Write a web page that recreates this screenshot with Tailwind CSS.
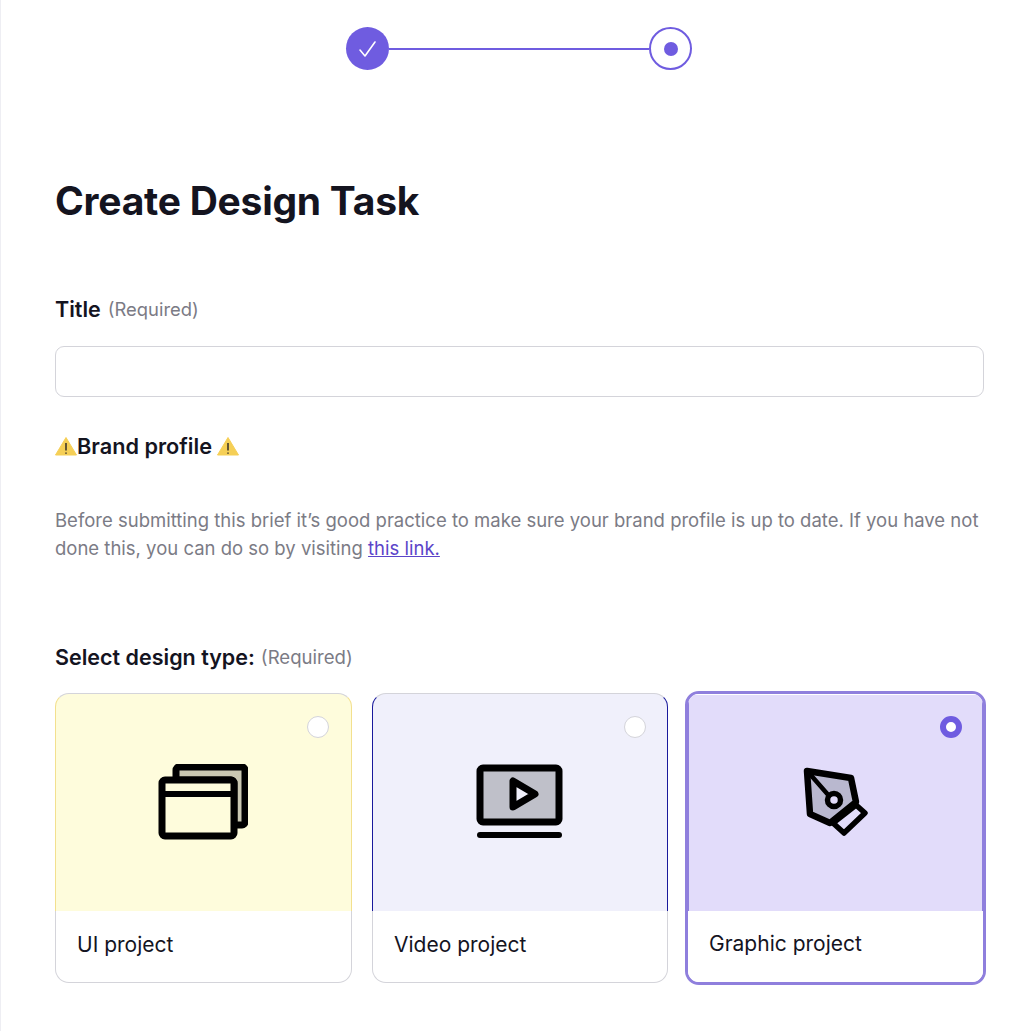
<!doctype html>
<html lang="en">
<head>
<meta charset="utf-8">
<title>Create Design Task</title>
<script src="https://cdn.jsdelivr.net/npm/@tailwindcss/browser@4"></script>
</head>
<body class="bg-white font-['Inter',sans-serif] text-[#14141f]">
<div class="w-[1030px] h-[1031px] overflow-hidden pl-[54px] pr-[46px] pt-[27px] border-l border-[#eeeef3]">
  <!-- stepper -->
  <div class="flex items-center justify-center mr-[1px]">
    <div class="w-[43px] h-[43px] rounded-full bg-[#6f5ce0] flex items-center justify-center">
      <svg width="20" height="18" viewBox="0 0 20 18" fill="none" stroke="white" stroke-width="1.6" stroke-linecap="round" stroke-linejoin="round"><path d="M2 10l5 6L17 2"/></svg>
    </div>
    <div class="w-[260px] h-[2px] bg-[#6f5ce0]"></div>
    <div class="w-[43px] h-[43px] rounded-full border-2 border-[#6f5ce0] flex items-center justify-center">
      <div class="w-[14px] h-[14px] rounded-full bg-[#6f5ce0]"></div>
    </div>
  </div>

  <h1 class="mt-[106px] text-[39px] leading-[50px] font-bold tracking-[-0.25px]">Create Design Task</h1>

  <div class="mt-[69px] flex items-baseline gap-[7px] leading-[28px]">
    <span class="text-[21.5px] font-semibold">Title</span>
    <span class="text-[18.4px] text-[#7b7b85] relative top-[-1px]">(Required)</span>
  </div>
  <div class="mt-[22px] h-[51px] rounded-[9px] border border-[#d4d4da] bg-white"></div>

  <div class="mt-[35px] flex items-center text-[21.7px] leading-[28px] font-semibold">
    <svg width="22" height="20" viewBox="0 0 22 20" class="shrink-0"><path d="M11 1.5L21.5 19H.5z" fill="#f5cf56" stroke="#f5cf56" stroke-linejoin="round"/><path d="M11 7v7.5M11 16.4v1.4" stroke="#14141f" stroke-width="1.3"/></svg>
    <span>Brand profile</span>
    <svg width="22" height="20" viewBox="0 0 22 20" class="shrink-0 ml-[5px]"><path d="M11 1.5L21.5 19H.5z" fill="#f5cf56" stroke="#f5cf56" stroke-linejoin="round"/><path d="M11 7v7.5M11 16.4v1.4" stroke="#14141f" stroke-width="1.3"/></svg>
  </div>

  <p class="mt-[46px] text-[18.5px] leading-[28px] text-[#7b7b85]">Before submitting this brief it’s good practice to make sure your brand profile is up to date. If you have not done this, you can do so by visiting <a class="text-[#5b45c9] underline" href="#">this link.</a></p>

  <div class="mt-[81px] flex items-baseline gap-[6px] leading-[28px]">
    <span class="text-[21.5px] font-semibold">Select design type:</span>
    <span class="text-[18.6px] text-[#7b7b85] relative top-[-1px]">(Required)</span>
  </div>

  <!-- design type cards -->
  <div class="mt-[21px] flex">
    <div class="shrink-0 w-[297px] h-[290px] flex flex-col">
      <div class="relative h-[218px] rounded-t-[14px] bg-[#fefcdc] flex items-center justify-center border-x border-x-[#f3e08e] border-t border-t-[#d4d4da]">
        <div class="absolute top-[22px] right-[22px] w-[22px] h-[22px] rounded-full bg-white border border-[#d4d4da]"></div>
        <svg width="90" height="76" viewBox="0 0 90 76" fill="none" stroke="black" stroke-width="7" stroke-linejoin="round" stroke-linecap="round" class="mt-[-2px] ml-[-1px]">
          <path d="M18 6a3 3 0 0 1 3-3h63a3 3 0 0 1 3 3v52a3 3 0 0 1-3 3h-8V19a3 3 0 0 0-3-3H18z" fill="#cac8b2"/>
          <rect x="4" y="16" width="72" height="56" rx="3" fill="#fefcdc"/>
          <path d="M4 30h72" stroke-width="6"/>
        </svg>
      </div>
      <div class="flex-1 bg-white pl-[21px] pt-[19px] text-[21px] leading-[30px] border-x border-b border-[#d4d4da] rounded-b-[14px]">UI project</div>
    </div>

    <div class="shrink-0 ml-[20px] w-[296px] h-[290px] flex flex-col">
      <div class="relative h-[218px] rounded-t-[14px] bg-[#f0f0fb] flex items-center justify-center border-x border-x-[#1a1a9c] border-t border-t-[#d4d4da]">
        <div class="absolute top-[22px] right-[21px] w-[22px] h-[22px] rounded-full bg-white border border-[#d4d4da]"></div>
        <svg width="88" height="76" viewBox="0 0 88 76" fill="none" stroke="black" stroke-width="7" stroke-linejoin="round" stroke-linecap="round" class="mt-[-1px]">
          <rect x="4" y="4" width="79" height="54" rx="3" fill="#bfc0c9"/>
          <path d="M37 17v26l22-13z" fill="#f0f0fb"/>
          <path d="M4 71h79" stroke-width="6"/>
        </svg>
      </div>
      <div class="flex-1 bg-white pl-[21px] pt-[19px] text-[21px] leading-[30px] border-x border-b border-[#d4d4da] rounded-b-[14px]">Video project</div>
    </div>

    <div class="shrink-0 ml-[17px] w-[301px] h-[294px] mt-[-2px] rounded-[14px] border-[3px] border-[#8f7fdd] overflow-hidden flex flex-col">
      <div class="relative h-[217px] bg-[#e2dcfa] flex items-center justify-center border-x border-x-[#8f7fdd] border-t border-t-white">
        <div class="absolute top-[21px] right-[20px] w-[22px] h-[22px] rounded-full bg-white border-[6px] border-[#6f5ce0]"></div>
        <svg width="66" height="70" viewBox="0 0 66 70" fill="none" stroke="black" stroke-width="6.5" stroke-linejoin="round" stroke-linecap="round" class="mt-[-2px]">
          <path d="M4 4l44 7 5 24-26 21-20-9z" fill="#b9b8cf"/>
          <path d="M6 6l21 24" stroke-width="4.5"/>
          <circle cx="31" cy="33" r="6.5" fill="#e2dcfa" stroke-width="5.5"/>
          <path d="M53 38l9 8-21 20-11-10z" fill="#e2dcfa" stroke-width="5.5"/>
        </svg>
      </div>
      <div class="flex-1 bg-white pl-[21px] pt-[18px] text-[21px] leading-[30px]">Graphic project</div>
    </div>
  </div>
</div>
</body>
</html>
